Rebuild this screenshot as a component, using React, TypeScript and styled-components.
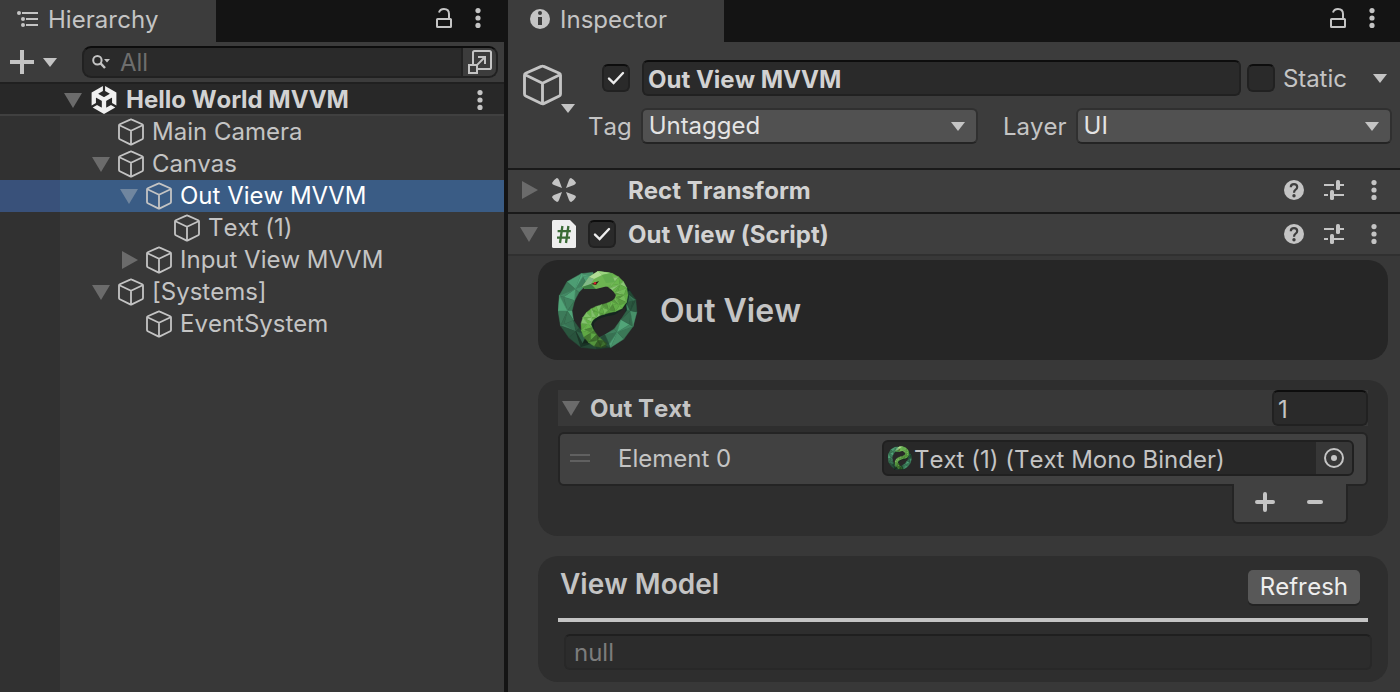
import React from "react";
import styled, { createGlobalStyle, css } from "styled-components";
import { SiUnity } from "react-icons/si";

const color = {
  bar: "#141414",
  panel: "#383838",
  header: "#3c3c3c",
  component: "#3e3e3e",
  field: "#2a2a2a",
  fieldEdge: "#212121",
  fieldTop: "#0d0d0d",
  card: "#2e2e2e",
  text: "#c4c4c4",
  bold: "#d2d2d2",
  icon: "#c4c4c4",
  select: "#515151",
};

const GlobalStyle = createGlobalStyle`
  * { box-sizing: border-box; }
  body { margin: 0; background: ${color.panel}; }
  body, button, input, select {
    font-family: Inter, "Liberation Sans", sans-serif;
    font-size: 24px;
    line-height: 30px;
    font-kerning: none;
    font-feature-settings: "calt" 0;
    color: ${color.text};
  }
  button { border: 0; padding: 0; background: none; display: flex; align-items: center; justify-content: center; }
  svg { display: block; flex: none; }
  h1, h2, h3, p, ul { margin: 0; padding: 0; font: inherit; }
`;

/* ---------- icons ---------- */

const Cube = ({ big = false }: { big?: boolean }) => (
  <svg width={big ? 39 : 26} height={big ? 42 : 28} viewBox="0 0 26 28" fill="none" stroke={color.icon} strokeWidth={big ? 1.9 : 1.8} strokeLinejoin="round">
    <path d="M12.2 1.6Q13 1.2 13.8 1.6L24.2 6.2Q25 6.6 25 7.5V20Q25 20.900 24.200 21.300L13.800 26.400Q13 26.800 12.200 26.400L1.800 21.300Q1 20.900 1 20V7.500Q1 6.600 1.800 6.200Z" />
    <path d="M1.400 7.200L13 12.800L24.600 7.200M13 12.800V26.400" />
  </svg>
);

const Fold = ({ open = true, bright = false }: { open?: boolean; bright?: boolean }) => (
  <svg width="18" height="18" viewBox="0 0 18 18" fill={bright ? "#70869f" : "#6b6b6b"}>
    <path d={open ? "M0 2H18L9 17Z" : "M2 0L18 9L2 18Z"} />
  </svg>
);

const Caret = () => (
  <svg width="14" height="9" viewBox="0 0 14 9" fill={color.icon}>
    <path d="M0 0H14L7 9Z" />
  </svg>
);

const Kebab = () => (
  <svg width="6" height="20" viewBox="0 0 6 20" fill={color.icon}>
    <circle cx="3" cy="2.600" r="2.600" />
    <circle cx="3" cy="10" r="2.600" />
    <circle cx="3" cy="17.400" r="2.600" />
  </svg>
);

const Lock = () => (
  <svg width="16" height="20" viewBox="0 0 16 20" fill="none" stroke={color.icon} strokeWidth="2">
    <rect x="1" y="11" width="14" height="8" rx="0.600" />
    <path d="M3 4.600Q4 1 8 1Q13 1 13 6V11" />
  </svg>
);

const HierarchyIcon = () => (
  <svg width="22" height="18" viewBox="0 0 22 18" fill={color.icon}>
    <circle cx="2" cy="3" r="2" />
    <circle cx="6" cy="9" r="2" />
    <circle cx="6" cy="15" r="2" />
    <path d="M5 2H21V4H5ZM9 8H21V10H9ZM9 14H21V16H9Z" />
  </svg>
);

const InfoIcon = () => (
  <svg width="20" height="20" viewBox="0 0 20 20">
    <circle cx="10" cy="10" r="10" fill={color.icon} />
    <circle cx="10" cy="4" r="2" fill={color.header} />
    <path d="M8 8H12V16H8Z" fill={color.header} />
  </svg>
);

const PlusIcon = () => (
  <svg width="24" height="24" viewBox="0 0 24 24" fill={color.icon}>
    <path d="M10 0H14V10H24V14H14V24H10V14H0V10H10Z" />
  </svg>
);

const SearchIcon = () => (
  <svg width="18" height="14" viewBox="0 0 18 14" fill="none" stroke={color.icon} strokeWidth="2">
    <circle cx="5.400" cy="5.200" r="4.200" />
    <path d="M8.400 8.200L13 13" strokeWidth="2.400" />
    <path d="M12 4H18L15 7.400Z" fill={color.icon} stroke="none" />
  </svg>
);

const PickerIcon = () => (
  <svg width="24" height="24" viewBox="0 0 24 24" fill="none" stroke={color.icon} strokeWidth="2">
    <path d="M5 14V2.600Q5 1 6.600 1H21.400Q23 1 23 2.600V17.400Q23 19 21.400 19H10" />
    <rect x="1" y="15" width="8" height="8" />
    <path d="M9.400 14.600L17 7M10 7H17V14" />
  </svg>
);

const CheckMark = () => (
  <svg width="18" height="14" viewBox="0 0 18 14" fill="none" stroke="#ededed" strokeWidth="2.400" strokeLinecap="round">
    <path d="M2 7.600L6.600 12L16 2" />
  </svg>
);

const RectTransformIcon = () => (
  <svg width="24" height="24" viewBox="0 0 24 24" fill={color.icon}>
    {[0, 90, 180, 270].map((turn) => (
      <path key={turn} transform={`rotate(${turn} 12 12)`} d="M0 5Q1.600 1.800 4.800 0Q6.200 .2 7 2L10 10L2 7Q.2 6.400 0 5Z" />
    ))}
  </svg>
);

const ScriptIcon = () => (
  <svg width="24" height="28" viewBox="0 0 24 28">
    <path d="M1.500 0H18L24 6V26.500Q24 28 22.500 28H1.500Q0 28 0 26.500V1.500Q0 0 1.500 0Z" fill="#eee" />
    <path d="M10.400 6L8 23M16.400 6L14 23M5.600 11.200H18.800M5 17.600H18" fill="none" stroke="#3a6b35" strokeWidth="2.300" />
  </svg>
);

const HelpIcon = () => (
  <svg width="20" height="20" viewBox="0 0 20 20">
    <circle cx="10" cy="10" r="10" fill={color.icon} />
    <path d="M6.800 7.200Q6.800 4.200 10 4.200Q13.200 4.200 13.200 7Q13.200 8.600 11.600 9.600Q10 10.600 10 12.800" fill="none" stroke={color.component} strokeWidth="2.200" />
    <circle cx="10" cy="15.800" r="1.700" fill={color.component} />
  </svg>
);

const PresetIcon = () => (
  <svg width="20" height="20" viewBox="0 0 20 20" fill={color.icon}>
    <path d="M0 4H10V6H0ZM16 4H20V6H16ZM0 14H4V16H0ZM10 14H20V16H10Z" />
    <rect x="12" y="0" width="4" height="10" rx="1.600" />
    <rect x="6" y="10" width="4" height="10" rx="1.600" />
  </svg>
);

const TargetIcon = () => (
  <svg width="20" height="20" viewBox="0 0 20 20">
    <circle cx="10" cy="10" r="9" fill="none" stroke={color.icon} strokeWidth="2" />
    <circle cx="10" cy="10" r="3" fill={color.icon} />
  </svg>
);

const AddIcon = () => (
  <svg width="20" height="20" viewBox="0 0 20 20" stroke={color.icon} strokeWidth="4" strokeLinecap="round">
    <path d="M10 2V18M2 10H18" />
  </svg>
);

const RemoveIcon = () => (
  <svg width="16" height="4" viewBox="0 0 16 4">
    <rect width="16" height="4" rx="2" fill={color.icon} />
  </svg>
);

/* ---------- snake emblem: two faceted bands built from spine points ---------- */

type Spine = { x: number; y: number; half: number; light: number };

const smooth = (spine: Spine[], steps: number): Spine[] => {
  const out: Spine[] = [];
  const cr = (a: number, b: number, c: number, d: number, t: number) =>
    0.5 * (2 * b + (c - a) * t + (2 * a - 5 * b + 4 * c - d) * t * t + (3 * b - a - 3 * c + d) * t * t * t);
  for (let i = 0; i < spine.length - 1; i++) {
    const p = [spine[Math.max(0, i - 1)], spine[i], spine[i + 1], spine[Math.min(spine.length - 1, i + 2)]];
    for (let s = 0; s < steps; s++) {
      const at = (k: keyof Spine) => cr(p[0][k], p[1][k], p[2][k], p[3][k], s / steps);
      out.push({ x: at("x"), y: at("y"), half: at("half"), light: at("light") });
    }
  }
  out.push(spine[spine.length - 1]);
  return out;
};

const facets = (spine: Spine[], hue: number, saturation: number, steps: number) => {
  const pts = smooth(spine, steps);
  const row = pts.map((p, i) => {
    const a = pts[Math.max(0, i - 1)];
    const b = pts[Math.min(pts.length - 1, i + 1)];
    const len = Math.hypot(b.x - a.x, b.y - a.y) || 1;
    const nx = -(b.y - a.y) / len;
    const ny = (b.x - a.x) / len;
    const mid = i % 2 ? 0.45 : -0.35;
    return [-1, mid, 1].map((k) => `${(p.x + nx * p.half * k).toFixed(1)},${(p.y + ny * p.half * k).toFixed(1)}`);
  });
  const shade = [6, -4, 2, -7, 8, -2, -5, 4];
  const out: { points: string; fill: string }[] = [];
  for (let i = 0; i < row.length - 1; i++) {
    for (let k = 0; k < 2; k++) {
      const quad = [row[i][k], row[i][k + 1], row[i + 1][k + 1], row[i + 1][k]];
      const tris = (i + k) % 2 ? [[0, 1, 2], [0, 2, 3]] : [[0, 1, 3], [1, 2, 3]];
      tris.forEach((t, n) => {
        const l = pts[i].light + shade[(i * 3 + k * 5 + n * 2) % 8];
        out.push({ points: t.map((v) => quad[v]).join(" "), fill: `hsl(${hue} ${saturation}% ${Math.max(6, l)}%)` });
      });
    }
  }
  return out;
};

const toSpine = ([x, y, half, light]: number[]): Spine => ({ x, y, half, light });

const ring = facets(
  [
    [36, 6, 4, 44], [26, 9, 6, 44], [15, 17, 8, 42], [9, 28, 8, 42], [7, 41, 7, 40], [9, 53, 7, 30],
    [16, 63, 7, 20], [26, 71, 7, 13], [38, 74, 5, 20], [50, 71, 7, 40], [61, 64, 7, 42], [69, 53, 7, 36],
    [74, 41, 5, 30], [73, 31, 5, 26], [69, 22, 3, 20],
  ].map(toSpine),
  148,
  34,
  1,
);

const body = facets(
  [
    [42, 8, 6, 58], [52, 10, 7, 56], [60, 16, 7, 54], [64, 25, 6, 46], [60, 34, 6, 46], [50, 38, 5, 48],
    [40, 41, 5, 54], [32, 46, 5, 54], [28, 54, 5, 48], [31, 64, 6, 40], [39, 72, 5, 30], [48, 75, 2, 24],
  ].map(toSpine),
  104,
  42,
  2,
);

const Emblem = ({ size }: { size: number }) => (
  <svg width={size} height={size} viewBox="0 0 80 80">
    <path d="M64 12Q80 26 78 44Q72 68 50 77Q30 82 16 68Q24 78 40 70Q68 62 68 34Z" fill="#0e2b22" />
    {ring.map((f, i) => <polygon key={i} points={f.points} fill={f.fill} stroke={f.fill} strokeWidth="0.400" />)}
    <path d="M71 24Q72 37 56 45Q42 46 36 53Q34 64 46 73L32 66L32 50Z" fill="#0b241c" fillOpacity="0.650" />
    {body.map((f, i) => <polygon key={i} points={f.points} fill={f.fill} stroke={f.fill} strokeWidth="0.400" />)}
    <path d="M24 17L31 7L40 1L53 3L57 12L50 16L38 19L27 19Z" fill="#6db552" />
    <path d="M31 7L40 1L44 5L36 9Z" fill="#b2dc96" />
    <path d="M40 1L53 3L44 5Z" fill="#9cd480" />
    <path d="M24 17L31 7L36 9L33 14Z" fill="#82b887" />
    <path d="M24 17L33 14L38 19L27 19Z" fill="#3c7f42" />
    <path d="M44 5L53 3L57 12L48 13Z" fill="#62ac4e" />
    <path d="M33 14L41 11L38 15Z" fill="#2a1512" />
    <circle cx="37" cy="13.200" r="1.300" fill="#d0252b" />
  </svg>
);

/* ---------- shared parts ---------- */

const sunken = css`
  background: ${color.field};
  border: 2px solid ${color.fieldEdge};
  border-top-color: ${color.fieldTop};
  border-radius: 6px;
  outline: 0;
`;

const Editor = styled.div`
  display: flex;
  min-height: 100vh;
  background: ${color.bar};
`;

const TabBar = styled.div`
  display: flex;
  height: 42px;
  background: ${color.bar};
`;

const Tab = styled.h1<{ $left: number; $gap: number }>`
  display: flex;
  align-items: center;
  width: 216px;
  padding: 0 0 4px ${(p) => p.$left}px;
  gap: ${(p) => p.$gap}px;
  background: ${color.header};
`;

const TabName = styled.span`
  padding-top: 2px;
`;

const TabTools = styled.div<{ $right: number }>`
  display: flex;
  align-items: center;
  gap: 23px;
  margin-left: auto;
  padding: 0 ${(p) => p.$right}px 6px 0;
`;

/* ---------- hierarchy ---------- */

const HierarchyPanel = styled.section`
  display: flex;
  flex-direction: column;
  width: 36%;
  background: ${color.panel};
`;

const HierarchyToolbar = styled.div`
  display: flex;
  align-items: center;
  height: 42px;
  padding: 0 6px 0 10px;
  background: ${color.header};
  border-bottom: 2px solid #202020;
`;

const CreateButton = styled.button`
  gap: 9px;
  margin-right: 25px;
`;

const SearchBox = styled.label`
  ${sunken}
  display: flex;
  flex: 1;
  align-items: center;
  height: 32px;
  min-width: 0;
  padding-left: 8px;
  gap: 10px;
  border-radius: 9px;
  overflow: hidden;
`;

const SearchInput = styled.input`
  flex: 1;
  min-width: 0;
  padding: 2px 0 0;
  border: 0;
  outline: 0;
  background: none;
  &::placeholder { color: #6e6e6e; opacity: 1; }
`;

const PickerButton = styled.button`
  width: 35px;
  height: 28px;
  background: ${color.header};
  border-left: 2px solid ${color.fieldEdge};
`;

const Tree = styled.ul`
  flex: 1;
  list-style: none;
  background: linear-gradient(to right, #313131 60px, ${color.panel} 60px);
`;

const SceneRow = styled.li`
  display: flex;
  align-items: center;
  height: 32px;
  padding: 0 21px 0 64px;
  background: #282828;
  box-shadow: inset 0 -2px 0 #404040;
  color: ${color.bold};
  font-weight: 700;
`;

const SceneIcon = styled.span`
  margin: 0 8px;
  color: #f0f0f0;
`;

const KebabButton = styled.button`
  margin-left: auto;
`;

const ObjectRow = styled.li<{ $depth: number; $selected?: boolean }>`
  display: flex;
  align-items: center;
  height: 32px;
  padding-left: ${(p) => 64 + p.$depth * 28}px;
  gap: 8px;
  white-space: nowrap;
  ${(p) =>
    p.$selected &&
    css`
      color: #fff;
      background: linear-gradient(to right, #39517a 60px, #3a5c85 60px);
    `}
`;

const FoldSlot = styled.span`
  width: 18px;
  height: 18px;
`;

type Item = { name: string; depth: number; fold?: "open" | "closed"; selected?: boolean };

const items: Item[] = [
  { name: "Main Camera", depth: 1 },
  { name: "Canvas", depth: 1, fold: "open" },
  { name: "Out View MVVM", depth: 2, fold: "open", selected: true },
  { name: "Text (1)", depth: 3 },
  { name: "Input View MVVM", depth: 2, fold: "closed" },
  { name: "[Systems]", depth: 1, fold: "open" },
  { name: "EventSystem", depth: 2 },
];

const Hierarchy = () => (
  <HierarchyPanel>
    <TabBar>
      <Tab $left={17} $gap={9}><HierarchyIcon /><TabName>Hierarchy</TabName></Tab>
      <TabTools $right={23}>
        <button aria-label="Lock hierarchy"><Lock /></button>
        <button aria-label="Hierarchy menu"><Kebab /></button>
      </TabTools>
    </TabBar>
    <HierarchyToolbar>
      <CreateButton aria-label="Create object"><PlusIcon /><Caret /></CreateButton>
      <SearchBox>
        <SearchIcon />
        <SearchInput aria-label="Search objects" placeholder="All" />
        <PickerButton aria-label="Open search window"><PickerIcon /></PickerButton>
      </SearchBox>
    </HierarchyToolbar>
    <Tree>
      <SceneRow>
        <Fold />
        <SceneIcon><SiUnity size={28} /></SceneIcon>
        Hello World MVVM
        <KebabButton aria-label="Scene menu"><Kebab /></KebabButton>
      </SceneRow>
      {items.map((item) => (
        <ObjectRow key={item.name} $depth={item.depth} $selected={item.selected}>
          <FoldSlot>{item.fold && <Fold open={item.fold === "open"} bright={item.selected} />}</FoldSlot>
          <Cube />
          <span>{item.name}</span>
        </ObjectRow>
      ))}
    </Tree>
  </HierarchyPanel>
);

/* ---------- inspector ---------- */

const InspectorPanel = styled.section`
  flex: 1;
  min-width: 0;
  margin-left: 4px;
  background: ${color.panel};
`;

const CheckFrame = styled.span`
  position: relative;
  display: block;
  width: 28px;
  height: 28px;
  flex: none;
`;

const CheckInput = styled.input`
  ${sunken}
  appearance: none;
  display: block;
  width: 28px;
  height: 28px;
  margin: 0;
  & + svg { position: absolute; left: 5px; top: 7px; visibility: hidden; pointer-events: none; }
  &:checked + svg { visibility: visible; }
`;

const CheckBox = ({ id, label, on = false }: { id: string; label?: string; on?: boolean }) => (
  <CheckFrame>
    <CheckInput id={id} type="checkbox" defaultChecked={on} aria-label={label} />
    <CheckMark />
  </CheckFrame>
);

const ObjectHeader = styled.div`
  display: flex;
  height: 126px;
  padding: 18px 8px 0 15px;
  background: ${color.header};
`;

const ObjectIconButton = styled.button`
  display: block;
  width: 54px;
  height: 54px;
  padding-top: 3px;
  margin-right: 11px;
  flex: none;
  & > svg:last-child { margin: -2px 0 0 38px; }
`;

const ObjectFields = styled.div`
  display: flex;
  flex: 1;
  flex-direction: column;
  min-width: 0;
  gap: 12px;
`;

const NameRow = styled.div`
  display: flex;
  align-items: center;
  height: 36px;
  padding: 0 5px 0 14px;
`;

const NameInput = styled.input`
  ${sunken}
  flex: 1;
  min-width: 0;
  height: 36px;
  margin: 0 6px 0 12px;
  padding: 2px 4px 0;
  color: ${color.bold};
  font-weight: 700;
`;

const StaticLabel = styled.label`
  margin: 0 26px 0 8px;
  padding-top: 2px;
`;

const TagRow = styled.div`
  display: flex;
  align-items: center;
  height: 36px;
`;

const FieldLabel = styled.label`
  padding: 2px 9px 0 0;
`;

const SelectFrame = styled.span<{ $grow: number }>`
  position: relative;
  flex: ${(p) => p.$grow} 1 0;
  min-width: 0;
  & > svg { position: absolute; right: 13px; top: 14px; pointer-events: none; }
`;

const Select = styled.select`
  appearance: none;
  display: block;
  width: 100%;
  height: 36px;
  padding: 0 6px;
  color: #e4e4e4;
  background: ${color.select};
  border: 2px solid #303030;
  border-bottom-color: #242424;
  border-radius: 6px;
  outline: 0;
`;

const Spacer = styled.span`
  width: 25px;
`;

const ComponentHeader = styled.div<{ $open: boolean }>`
  display: flex;
  align-items: center;
  height: 44px;
  padding: 0 23px 0 12px;
  background: ${color.component};
  border-top: 2px solid #1a1a1a;
  border-bottom: 2px solid ${(p) => (p.$open ? "#303030" : color.component)};
`;

const ComponentIcon = styled.span`
  display: flex;
  width: 36px;
  margin-left: 14px;
`;

const EnableSlot = styled.span`
  width: 40px;
`;

const ComponentTitle = styled.h2`
  padding-top: 1px;
  color: ${color.bold};
  font-weight: 700;
`;

const ComponentTools = styled.div`
  display: flex;
  align-items: center;
  gap: 20px;
  margin-left: auto;
  & > button:last-child { margin-left: 7px; }
`;

const Component = ({ title, open, icon, toggle }: { title: string; open: boolean; icon: React.ReactNode; toggle?: boolean }) => (
  <ComponentHeader $open={open}>
    <Fold open={open} />
    <ComponentIcon>{icon}</ComponentIcon>
    <EnableSlot>{toggle && <CheckBox id="component-enabled" label={`Enable ${title}`} on />}</EnableSlot>
    <ComponentTitle>{title}</ComponentTitle>
    <ComponentTools>
      <button aria-label="Help"><HelpIcon /></button>
      <button aria-label="Presets"><PresetIcon /></button>
      <button aria-label="More"><Kebab /></button>
    </ComponentTools>
  </ComponentHeader>
);

const Body = styled.div`
  display: flex;
  flex-direction: column;
  gap: 20px;
  padding: 4px 12px 10px 30px;
`;

const Card = styled.div`
  padding: 10px 20px 12px;
  background: ${color.card};
  border-radius: 20px;
`;

const TitleCard = styled(Card)`
  display: flex;
  align-items: center;
  height: 100px;
  padding: 0 20px;
  gap: 22px;
  background: #262626;
`;

const CardTitle = styled.h2<{ $size: number }>`
  padding-top: 2px;
  color: ${color.text};
  font-size: ${(p) => p.$size}px;
  font-weight: 600;
  line-height: 36px;
`;

const ListHeader = styled.div`
  display: flex;
  align-items: center;
  height: 36px;
  padding-left: 4px;
  gap: 10px;
  background: ${color.panel};
`;

const ListTitle = styled.h3`
  padding-top: 2px;
  font-weight: 700;
`;

const SizeInput = styled.input`
  ${sunken}
  width: 96px;
  height: 36px;
  margin-left: auto;
  padding: 2px 4px 0;
`;

const ListBox = styled.div`
  display: flex;
  align-items: center;
  height: 54px;
  margin-top: 6px;
  padding: 0 12px 2px 10px;
  background: #414141;
  border: 2px solid #242424;
  border-radius: 6px;
`;

const Handle = styled.span`
  width: 20px;
  height: 8px;
  margin-right: 28px;
  border: solid #606060;
  border-width: 2px 0;
`;

const ElementLabel = styled.span`
  flex: 264 1 0;
  padding-top: 2px;
`;

const ObjectField = styled.div`
  display: flex;
  flex: 464 1 0;
  align-items: center;
  height: 36px;
  min-width: 0;
  padding-left: 4px;
  gap: 2px;
  background: #282828;
  border: 2px solid #202020;
  border-radius: 6px;
  white-space: nowrap;
  overflow: hidden;
`;

const ObjectValue = styled.span`
  padding-top: 3px;
`;

const ObjectPicker = styled.button`
  width: 36px;
  height: 32px;
  margin-left: auto;
  background: #373737;
  flex: none;
`;

const ListFooter = styled.div`
  position: relative;
  display: flex;
  align-items: flex-start;
  justify-content: center;
  width: 116px;
  height: 40px;
  margin: -2px 20px 0 auto;
  gap: 14px;
  background: #414141;
  border: 2px solid #242424;
  border-top: 0;
  border-radius: 0 0 6px 6px;
  & > button { width: 36px; height: 36px; }
`;

const ModelHeader = styled.div`
  display: flex;
  align-items: flex-start;
  justify-content: space-between;
  height: 56px;
  padding: 0 8px 0 2px;
  margin-bottom: 12px;
  border-bottom: 4px solid ${color.text};
`;

const ModelTitle = styled(CardTitle)`
  padding: 0;
`;

const RefreshButton = styled.button`
  height: 34px;
  padding: 0 12px;
  margin-top: 4px;
  color: #eee;
  background: #585858;
  border-radius: 5px;
  box-shadow: 0 2px 0 #232323;
`;

const ModelInput = styled.input`
  display: block;
  width: calc(100% - 2px);
  height: 36px;
  margin-left: 6px;
  padding: 0 8px;
  color: #7c7c7c;
  background: #2c2c2c;
  border: 2px solid #282828;
  border-top-color: #1f1f1f;
  border-radius: 6px;
  outline: 0;
`;

const Inspector = () => (
  <InspectorPanel>
    <TabBar>
      <Tab $left={22} $gap={10}><InfoIcon /><TabName>Inspector</TabName></Tab>
      <TabTools $right={25}>
        <button aria-label="Lock inspector"><Lock /></button>
        <button aria-label="Inspector menu"><Kebab /></button>
      </TabTools>
    </TabBar>
    <ObjectHeader>
      <ObjectIconButton aria-label="Choose object icon"><Cube big /><Caret /></ObjectIconButton>
      <ObjectFields>
        <NameRow>
          <CheckBox id="active" label="Active" on />
          <NameInput aria-label="Object name" defaultValue="Out View MVVM" />
          <CheckBox id="static" />
          <StaticLabel htmlFor="static">Static</StaticLabel>
          <button aria-label="Static options"><Caret /></button>
        </NameRow>
        <TagRow>
          <FieldLabel htmlFor="tag">Tag</FieldLabel>
          <SelectFrame $grow={338}>
            <Select id="tag" defaultValue="Untagged"><option>Untagged</option></Select>
            <Caret />
          </SelectFrame>
          <Spacer />
          <FieldLabel htmlFor="layer">Layer</FieldLabel>
          <SelectFrame $grow={317}>
            <Select id="layer" defaultValue="UI"><option>UI</option></Select>
            <Caret />
          </SelectFrame>
        </TagRow>
      </ObjectFields>
    </ObjectHeader>
    <Component title="Rect Transform" open={false} icon={<RectTransformIcon />} />
    <Component title="Out View (Script)" open icon={<ScriptIcon />} toggle />
    <Body>
      <TitleCard>
        <Emblem size={80} />
        <CardTitle $size={32}>Out View</CardTitle>
      </TitleCard>
      <Card>
        <ListHeader>
          <Fold />
          <ListTitle>Out Text</ListTitle>
          <SizeInput aria-label="Out Text size" defaultValue="1" />
        </ListHeader>
        <ListBox>
          <Handle />
          <ElementLabel>Element 0</ElementLabel>
          <ObjectField>
            <Emblem size={24} />
            <ObjectValue>Text (1) (Text Mono Binder)</ObjectValue>
            <ObjectPicker aria-label="Pick object"><TargetIcon /></ObjectPicker>
          </ObjectField>
        </ListBox>
        <ListFooter>
          <button aria-label="Add element"><AddIcon /></button>
          <button aria-label="Remove element"><RemoveIcon /></button>
        </ListFooter>
      </Card>
      <Card>
        <ModelHeader>
          <ModelTitle $size={28}>View Model</ModelTitle>
          <RefreshButton>Refresh</RefreshButton>
        </ModelHeader>
        <ModelInput aria-label="View Model value" defaultValue="null" readOnly />
      </Card>
    </Body>
  </InspectorPanel>
);

export default function App() {
  return (
    <>
      <GlobalStyle />
      <Editor>
        <Hierarchy />
        <Inspector />
      </Editor>
    </>
  );
}
